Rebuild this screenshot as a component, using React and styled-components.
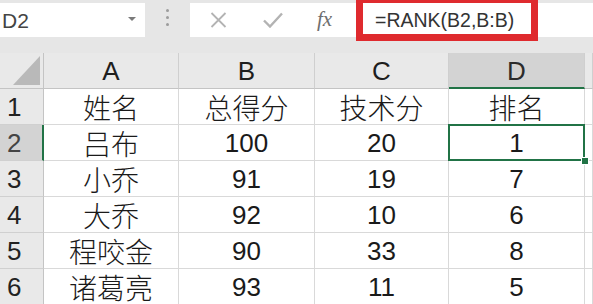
import React from "react";
import styled, { createGlobalStyle, css } from "styled-components";

const GREEN = "#217346";

const Global = createGlobalStyle`
  html, body {
    margin: 0;
    padding: 0;
    background: #ffffff;
    overflow: hidden;
  }
  body {
    font-family: "Liberation Sans", "Noto Sans CJK SC", sans-serif;
  }
`;

const Page = styled.div`
  width: 593px;
  height: 304px;
  overflow: hidden;
  background: #ffffff;
`;

const Toolbar = styled.div`
  display: flex;
  align-items: flex-start;
  height: 53px;
  padding-top: 3px;
  box-sizing: border-box;
  background: #e6e6e6;
`;

const NameBox = styled.div`
  width: 145px;
  height: 34px;
  box-sizing: border-box;
  background: #ffffff;
  display: flex;
  align-items: center;
  justify-content: space-between;
  padding: 0 9px 0 2px;
`;

const NameText = styled.span`
  font-size: 21px;
  color: #444444;
  line-height: 1;
  padding-top: 1px;
`;

const DropArrow = styled.span`
  width: 0;
  height: 0;
  border-left: 4px solid transparent;
  border-right: 4px solid transparent;
  border-top: 4px solid #7a7a7a;
  margin-top: -2px;
`;

const Divider = styled.div`
  width: 45px;
  height: 34px;
  display: flex;
  flex-direction: column;
  align-items: center;
  justify-content: center;
  gap: 4px;
  padding-bottom: 5px;
  box-sizing: border-box;
`;

const Dot = styled.span`
  width: 3px;
  height: 3px;
  border-radius: 50%;
  background: #9c9c9c;
`;

const FormulaBar = styled.div`
  position: relative;
  flex: 1;
  height: 34px;
  background: #ffffff;
  display: flex;
  align-items: center;
`;

const IconSlot = styled.span`
  display: flex;
  align-items: center;
  justify-content: center;
  width: ${(p) => p.$w}px;
  margin-left: ${(p) => p.$ml}px;
  color: #b3b3b3;
`;

const Fx = styled.span`
  display: inline-block;
  width: 20px;
  margin-left: 34px;
  font-family: "Liberation Serif", "DejaVu Serif", serif;
  font-style: italic;
  font-size: 21px;
  color: #6e6e6e;
  line-height: 1;
  padding-bottom: 2px;
`;

const FormulaText = styled.span`
  margin-left: 38px;
  font-size: 19.5px;
  color: #333333;
  line-height: 1;
  padding-top: 1px;
`;

const Highlight = styled.div`
  position: absolute;
  left: 166px;
  top: -7px;
  width: 182px;
  height: 45px;
  box-sizing: border-box;
  border: 7px solid #df2a2e;
  pointer-events: none;
`;

const Sheet = styled.div`
  display: grid;
  grid-template-columns: 44px 135px 136px 134px 136px 1fr;
  grid-auto-rows: 36px;
`;

const baseCell = css`
  box-sizing: border-box;
  border-right: 1px solid #d9d9d9;
  border-bottom: 1px solid #d9d9d9;
  display: flex;
  align-items: center;
  position: relative;
`;

const Corner = styled.div`
  ${baseCell};
  background: #e9e9e9;
  border-right: 1px solid #c4c4c4;
  border-bottom: 1px solid #c4c4c4;
  &::after {
    content: "";
    position: absolute;
    right: 3px;
    bottom: 3px;
    width: 0;
    height: 0;
    border-left: 27px solid transparent;
    border-bottom: 29px solid #b9b9b9;
  }
`;

const ColHeader = styled.div`
  ${baseCell};
  justify-content: center;
  background: ${(p) => (p.$selected ? "#d3d3d3" : "#e9e9e9")};
  border-right: 1px solid #cfcfcf;
  border-bottom: ${(p) => (p.$selected ? `2px solid ${GREEN}` : "1px solid #c4c4c4")};
  font-size: 26px;
  color: ${(p) => (p.$selected ? "#2b2b2b" : "#1e1e1e")};
  padding-top: ${(p) => (p.$selected ? "3px" : "2px")};
`;

const RowHeader = styled.div`
  ${baseCell};
  background: ${(p) => (p.$selected ? "#d3d3d3" : "#e9e9e9")};
  border-right: ${(p) => (p.$selected ? `2px solid ${GREEN}` : "1px solid #c4c4c4")};
  border-bottom: 1px solid #d0d0d0;
  padding-left: 7px;
  padding-top: 2px;
  font-size: 26px;
  color: ${(p) => (p.$selected ? "#444444" : "#222222")};
`;

const Cell = styled.div`
  ${baseCell};
  justify-content: center;
  background: #ffffff;
  color: #1a1a1a;
  font-size: ${(p) => (p.$cjk ? "28px" : "26px")};
  font-weight: ${(p) => (p.$cjk ? 300 : 400)};
  padding-top: ${(p) => (p.$cjk ? "0px" : "2px")};
  ${(p) =>
    p.$selected &&
    css`
      &::before {
        content: "";
        position: absolute;
        left: -1px;
        top: -1px;
        right: -1px;
        bottom: -1px;
        border: 2px solid ${GREEN};
        pointer-events: none;
      }
      &::after {
        content: "";
        position: absolute;
        right: -5px;
        bottom: -5px;
        width: 6px;
        height: 6px;
        background: ${GREEN};
        border: 1px solid #ffffff;
        z-index: 2;
      }
    `}
`;

const columns = ["A", "B", "C", "D", ""];

const rows = [
  [{ v: "姓名", cjk: true }, { v: "总得分", cjk: true }, { v: "技术分", cjk: true }, { v: "排名", cjk: true }],
  [{ v: "吕布", cjk: true }, { v: "100" }, { v: "20" }, { v: "1" }],
  [{ v: "小乔", cjk: true }, { v: "91" }, { v: "19" }, { v: "7" }],
  [{ v: "大乔", cjk: true }, { v: "92" }, { v: "10" }, { v: "6" }],
  [{ v: "程咬金", cjk: true }, { v: "90" }, { v: "33" }, { v: "8" }],
  [{ v: "诸葛亮", cjk: true }, { v: "93" }, { v: "11" }, { v: "5" }],
];

const CrossIcon = () => (
  <svg width="17" height="16" viewBox="0 0 17 16" fill="none">
    <path d="M1.5 1 L15.5 15 M15.5 1 L1.5 15" stroke="currentColor" strokeWidth="1.8" />
  </svg>
);

const CheckIcon = () => (
  <svg width="20" height="16" viewBox="0 0 20 16" fill="none">
    <path d="M1 8.5 L7 14.5 L19 1.5" stroke="currentColor" strokeWidth="2.4" />
  </svg>
);

export default function App() {
  return (
    <Page>
      <Global />
      <Toolbar>
        <NameBox>
          <NameText>D2</NameText>
          <DropArrow />
        </NameBox>
        <Divider>
          <Dot />
          <Dot />
          <Dot />
        </Divider>
        <FormulaBar>
          <IconSlot $w={17} $ml={20}>
            <CrossIcon />
          </IconSlot>
          <IconSlot $w={20} $ml={36}>
            <CheckIcon />
          </IconSlot>
          <Fx>fx</Fx>
          <FormulaText>=RANK(B2,B:B)</FormulaText>
          <Highlight />
        </FormulaBar>
      </Toolbar>
      <Sheet>
        <Corner />
        {columns.map((c, i) => (
          <ColHeader key={i} $selected={c === "D"}>
            {c}
          </ColHeader>
        ))}
        {rows.map((r, ri) => (
          <React.Fragment key={ri}>
            <RowHeader $selected={ri === 1}>{ri + 1}</RowHeader>
            {r.map((cell, ci) => (
              <Cell key={ci} $cjk={cell.cjk} $selected={ri === 1 && ci === 3}>
                {cell.v}
              </Cell>
            ))}
            <Cell />
          </React.Fragment>
        ))}
      </Sheet>
    </Page>
  );
}
